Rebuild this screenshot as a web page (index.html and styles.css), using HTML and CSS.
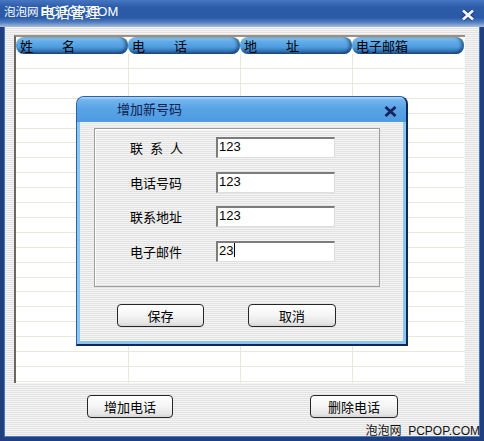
FILE: index.html
```html
<!DOCTYPE html>
<html lang="zh-CN">
<head>
  <meta charset="UTF-8">
  <title>电话管理</title>
  <link rel="stylesheet" href="styles.css">
</head>
<body>
  <div class="window">
    <!-- Заголовок окна -->
    <div class="titlebar">
      <span class="mark-top"><span class="cn">泡泡网</span>PCPOP.COM</span>
      <span class="title">电话管理</span>
      <svg class="close-main" width="14" height="12" viewBox="0 0 14 12">
        <path d="M2 1.5 L12 10.5 M12 1.5 L2 10.5" stroke="#1d3a78" stroke-width="4.4" fill="none"/>
        <path d="M2 1.5 L12 10.5 M12 1.5 L2 10.5" stroke="#f2f4fb" stroke-width="2.8" fill="none"/>
      </svg>
    </div>

    <div class="frame">
      <!-- Список контактов -->
      <div class="list">
        <div class="list-head">
          <div class="col-head spaced">姓名</div>
          <div class="col-head spaced">电话</div>
          <div class="col-head spaced">地址</div>
          <div class="col-head">电子邮箱</div>
        </div>
        <div class="list-body">
          <div class="col"></div>
          <div class="col"></div>
          <div class="col"></div>
          <div class="col"></div>
        </div>
      </div>

      <div class="actions">
        <button class="btn btn-main">增加电话</button>
        <button class="btn btn-main wide">删除电话</button>
      </div>
    </div>

    <div class="mark-bottom">泡泡网&nbsp;&nbsp;PCPOP.COM</div>

    <!-- Диалог добавления номера -->
    <div class="dialog">
      <div class="dialog-title">
        <span>增加新号码</span>
        <svg class="close-dialog" width="13" height="11" viewBox="0 0 13 11">
          <path d="M1.5 1 L11.5 10 M11.5 1 L1.5 10" stroke="#16225a" stroke-width="2.8" fill="none"/>
        </svg>
      </div>
      <div class="dialog-body">
        <div class="group">
          <div class="row">
            <span class="label spread">联系人</span>
            <span class="field">123</span>
          </div>
          <div class="row">
            <span class="label">电话号码</span>
            <span class="field">123</span>
          </div>
          <div class="row">
            <span class="label">联系地址</span>
            <span class="field">123</span>
          </div>
          <div class="row">
            <span class="label">电子邮件</span>
            <span class="field">23<span class="caret"></span></span>
          </div>
        </div>
        <div class="dialog-actions">
          <button class="btn btn-save">保存</button>
          <button class="btn btn-cancel">取消</button>
        </div>
      </div>
    </div>
  </div>
</body>
</html>
```

FILE: styles.css
```css
/* Базовые стили */
body {
  margin: 0;
  font-family: "Noto Sans CJK SC", "Liberation Sans", sans-serif;
  font-size: 13px;
  color: #000;
}
.window {
  position: relative;
  width: 484px;
  height: 441px;
  display: flex;
  flex-direction: column;
}
/* Заголовок */
.titlebar {
  position: relative;
  height: 27px;
  flex-shrink: 0;
  display: flex;
  align-items: flex-start;
  color: #fff;
  background: linear-gradient(to bottom, #4776c2 0, #2d5da9 25%, #2a5aa7 65%, #4f7cc0 82%, #a8bcdc 100%);
}
.title {
  margin-left: 40px;
  margin-top: 3px;
  font-size: 15px;
  line-height: 18px;
}
.mark-top {
  position: absolute;
  left: 4px;
  top: 3px;
  font-family: "Liberation Sans", "Noto Sans CJK SC", sans-serif;
  font-size: 13px;
  line-height: 16px;
  color: #fff;
}
.mark-top .cn {
  font-family: "Noto Sans CJK SC", sans-serif;
  font-size: 11.5px;
  margin-right: 2px;
}
.close-main {
  margin-left: auto;
  margin-right: 9px;
  margin-top: 9px;
}
/* Тело окна */
.frame {
  flex: 1;
  box-sizing: border-box;
  border: 4px solid #1f3f7e;
  border-top: 0;
  box-shadow: inset 1px 0 0 #4a76bc, inset -1px 0 0 #4a76bc, inset 0 -1px 0 #4a76bc;
  padding: 8px 15px 0 10px;
  background: repeating-linear-gradient(to bottom, #f4f4f4 0 1px, #e3e3e3 1px 2px);
  display: flex;
  flex-direction: column;
}
.list {
  height: 348px;
  box-sizing: border-box;
  border-top: 2px solid #9a9080;
  border-left: 2px solid #6c6760;
  background-color: #fff;
  display: flex;
  flex-direction: column;
}
.list-head {
  height: 17px;
  display: flex;
  flex-shrink: 0;
}
.col-head {
  width: 112px;
  box-sizing: border-box;
  padding-left: 4px;
  line-height: 17px;
  border-radius: 8px;
  background: linear-gradient(to bottom, #93c9f1 0, #64ade9 25%, #4c9ce0 60%, #3475b8 82%, #1f4a7a 100%);
  box-shadow: inset -3px 0 3px rgba(10, 30, 60, 0.45);
}
.col-head.spaced {
  letter-spacing: 29px;
}
.list-body {
  flex: 1;
  display: grid;
  grid-template-columns: 112px 112px 112px 112px;
  background: repeating-linear-gradient(to bottom, transparent 0 13.9px, #ebe7da 13.9px 14.9px);
}
.col + .col {
  border-left: 1px solid #ebe7da;
}
/* Кнопки */
.btn {
  height: 23px;
  padding: 0;
  box-sizing: border-box;
  border: 1px solid #262626;
  border-radius: 4px;
  background: linear-gradient(to bottom, #ffffff 0, #f6f6f6 45%, #e6e6e6 85%, #d4d4d4 100%);
  font-family: "Noto Sans CJK SC", sans-serif;
  font-size: 13px;
  color: #000;
  line-height: 20px;
}
.actions {
  display: flex;
  margin-top: 12px;
  margin-left: 73px;
}
.btn-main {
  width: 86px;
}
.btn-main.wide {
  width: 88px;
  margin-left: 137px;
}
.mark-bottom {
  position: absolute;
  right: 4px;
  bottom: 3px;
  font-family: "Liberation Sans", "Noto Sans CJK SC", sans-serif;
  font-size: 12px;
  line-height: 14px;
  color: #111;
}
/* Диалог */
.dialog {
  position: absolute;
  left: 76px;
  top: 96px;
  width: 332px;
  height: 250px;
  box-sizing: border-box;
  border: 1px solid #2c62a6;
  border-right: 2px solid #0e2a58;
  border-bottom: 2px solid #0e2a58;
  border-radius: 8px 8px 0 0;
  background-color: #8cc6f0;
  padding: 0 3px 3px 3px;
  display: flex;
  flex-direction: column;
}
.dialog-title {
  height: 25px;
  flex-shrink: 0;
  margin: 0 -3px;
  padding: 3px 0 0 40px;
  box-sizing: border-box;
  display: flex;
  align-items: flex-start;
  border-radius: 7px 7px 0 0;
  color: #0e1c4e;
  line-height: 17px;
  background: linear-gradient(to bottom, #b0d8f8 0, #72b4ee 3px, #5aa4e6 45%, #4e9ae2 100%);
}
.close-dialog {
  margin-left: auto;
  margin-right: 9px;
  margin-top: 6px;
}
.dialog-body {
  flex: 1;
  padding: 6px 23px 0 14px;
  background: repeating-linear-gradient(to bottom, #f4f4f4 0 1px, #e3e3e3 1px 2px);
}
.group {
  height: 159px;
  box-sizing: border-box;
  border: 1px solid #9c9c9c;
  box-shadow: inset 1px 1px 0 #fff;
  padding: 8px 0 0 35px;
  display: flex;
  flex-direction: column;
  gap: 13.5px;
}
.row {
  display: flex;
  align-items: center;
  height: 21px;
}
.label {
  width: 86px;
  line-height: 21px;
}
.label.spread {
  letter-spacing: 7px;
}
.field {
  width: 119px;
  height: 21px;
  box-sizing: border-box;
  padding-left: 1px;
  background-color: #fff;
  border-top: 2px solid #7c7c7c;
  border-left: 2px solid #7c7c7c;
  border-right: 1px solid #dedede;
  border-bottom: 1px solid #dedede;
  font-family: "Liberation Sans", sans-serif;
  font-size: 13px;
  line-height: 15px;
}
.caret {
  display: inline-block;
  width: 1px;
  height: 14px;
  margin-left: 1px;
  vertical-align: -2px;
  background-color: #000;
}
.dialog-actions {
  display: flex;
  margin-top: 17px;
  margin-left: 23px;
  gap: 44px;
}
.btn-save {
  width: 87px;
}
.btn-cancel {
  width: 88px;
}
```
